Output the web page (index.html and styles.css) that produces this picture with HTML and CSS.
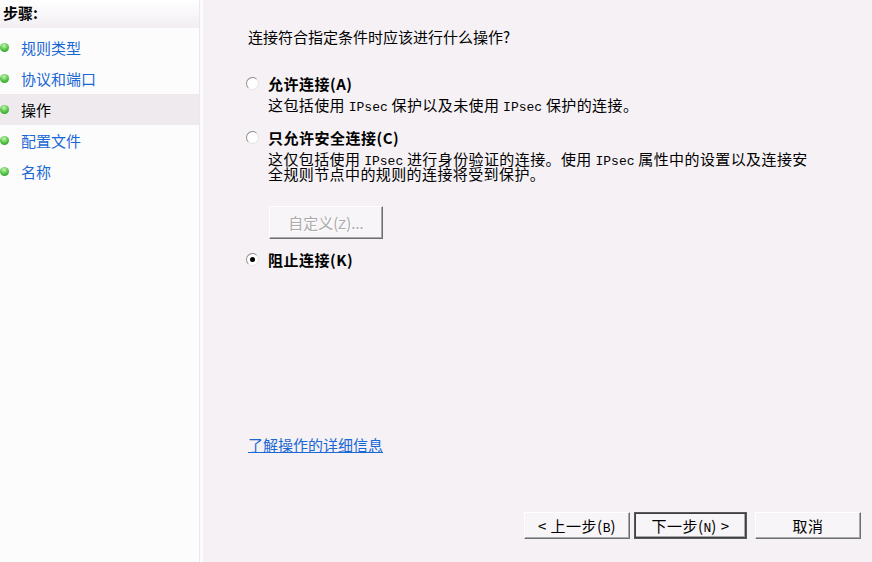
FILE: index.html
```html
<!DOCTYPE html>
<html lang="zh-CN">
<head>
    <meta charset="UTF-8">
    <title>新建出站规则向导</title>
    <link rel="stylesheet" href="styles.css">
</head>
<body>
    <div class="wizard">
        <aside class="steps">
            <div class="steps-head">步骤:</div>
            <ul class="step-list">
                <li class="step"><span class="dot"></span><a href="#">规则类型</a></li>
                <li class="step"><span class="dot"></span><a href="#">协议和端口</a></li>
                <li class="step current"><span class="dot"></span><span>操作</span></li>
                <li class="step"><span class="dot"></span><a href="#">配置文件</a></li>
                <li class="step"><span class="dot"></span><a href="#">名称</a></li>
            </ul>
        </aside>

        <main class="page">
            <p class="question">连接符合指定条件时应该进行什么操作?</p>

            <div class="option first">
                <span class="radio"></span>
                <span class="option-label">允许连接(A)</span>
                <p class="option-desc">这包括使用 <span class="latin">IPsec</span> 保护以及未使用 <span class="latin">IPsec</span> 保护的连接。</p>
            </div>

            <div class="option">
                <span class="radio"></span>
                <span class="option-label">只允许安全连接(C)</span>
                <p class="option-desc">这仅包括使用 <span class="latin">IPsec</span> 进行身份验证的连接。使用 <span class="latin">IPsec</span> 属性中的设置以及连接安全规则节点中的规则的连接将受到保护。</p>
            </div>

            <button class="btn custom" disabled>自定义(<span class="latin">Z</span>)...</button>

            <div class="option block">
                <span class="radio checked"></span>
                <span class="option-label">阻止连接(K)</span>
            </div>

            <a class="help-link" href="#">了解操作的详细信息</a>

            <div class="actions">
                <button class="btn back">&lt; 上一步(<span class="latin">B</span>)</button>
                <button class="btn next">下一步(<span class="latin">N</span>) &gt;</button>
                <button class="btn cancel">取消</button>
            </div>
        </main>
    </div>
</body>
</html>
```

FILE: styles.css
```css
body {
    margin: 0;
    font-family: "Noto Sans CJK SC", "Liberation Sans", sans-serif;
    font-size: 15px;
    color: #000;
    background: #f5f1f5;
}

.wizard {
    display: flex;
    height: 100vh;
}

/* left column with the steps */
.steps {
    width: 199px;
    background: #fdfcfd;
    border-right: 1px solid #ebe7eb;
}

.steps-head {
    height: 28px;
    line-height: 26px;
    padding-left: 3px;
    font-weight: bold;
    background: linear-gradient(#ffffff, #f2eef2);
}

.step-list {
    list-style: none;
    margin: 4px 0 0;
    padding: 0;
}

.step {
    display: flex;
    align-items: center;
    height: 31px;
    line-height: 18px;
}

.step.current {
    background: #eeeaee;
}

.step a {
    color: #1a68d4;
    text-decoration: none;
}

.dot {
    width: 9px;
    height: 9px;
    margin: -1px 12px 0 0;
    border-radius: 50%;
    background: radial-gradient(circle at 45% 30%, #c8f5b0, #4cc03f 55%, #2a8a25);
}

/* right part */
.page {
    flex: 1;
    display: flex;
    flex-direction: column;
    align-items: flex-start;
    padding: 28px 0 0 43px;
    border-left: 3px solid #fdfcfd;
}

.question {
    margin: 0;
    padding-left: 2px;
    line-height: 18px;
}

.option {
    display: grid;
    grid-template-columns: 22px 540px;
    margin-top: 16px;
}

.option.first {
    margin-top: 29px;
}

.option.block {
    margin-top: 12px;
}

.radio {
    align-self: center;
    width: 11px;
    height: 11px;
    margin-top: -1px;
    border-radius: 50%;
    border: 1px solid;
    border-color: #8c8c8c #e4e4e4 #e4e4e4 #8c8c8c;
    background: #fff;
    position: relative;
}

.radio.checked::after {
    content: "";
    position: absolute;
    left: 3px;
    top: 3px;
    width: 5px;
    height: 5px;
    border-radius: 50%;
    background: #000;
}

.option-label {
    font-weight: bold;
    line-height: 18px;
    letter-spacing: 0.5px;
}

.option-desc {
    grid-column: 2;
    margin: 5px 0 0;
    line-height: 14px;
    letter-spacing: 0.4px;
}

.latin {
    font-family: "Liberation Mono", monospace;
    font-size: 13px;
    line-height: 10px;
    letter-spacing: 0;
}

.btn {
    font-family: inherit;
    font-size: 15px;
    color: #000;
    background: #f7f5f7;
    border: 1px solid;
    border-color: #fff #6f6f6f #6f6f6f #fff;
    box-shadow: inset -1px -1px 0 #a8a8a8;
    padding: 0;
    line-height: 18px;
}

.btn.custom {
    width: 114px;
    height: 33px;
    margin: 25px 0 0 23px;
    color: #ababab;
    text-shadow: 1px 1px 0 #fff;
}

.help-link {
    margin: auto 0 58px 2px;
    line-height: 18px;
    color: #1a68d4;
}

.actions {
    align-self: stretch;
    display: flex;
    justify-content: flex-end;
    padding: 0 11px 23px 0;
}

.actions .btn {
    width: 106px;
    height: 27px;
    letter-spacing: 0.5px;
}

.actions .next {
    width: 113px;
    margin: 0 8px 0 4px;
    outline: 1px solid #404040;
    outline-offset: -2px;
    border-color: #5a5a5a;
    box-shadow: inset 1px 1px 0 #fff, inset -2px -2px 0 #a8a8a8;
}
```
